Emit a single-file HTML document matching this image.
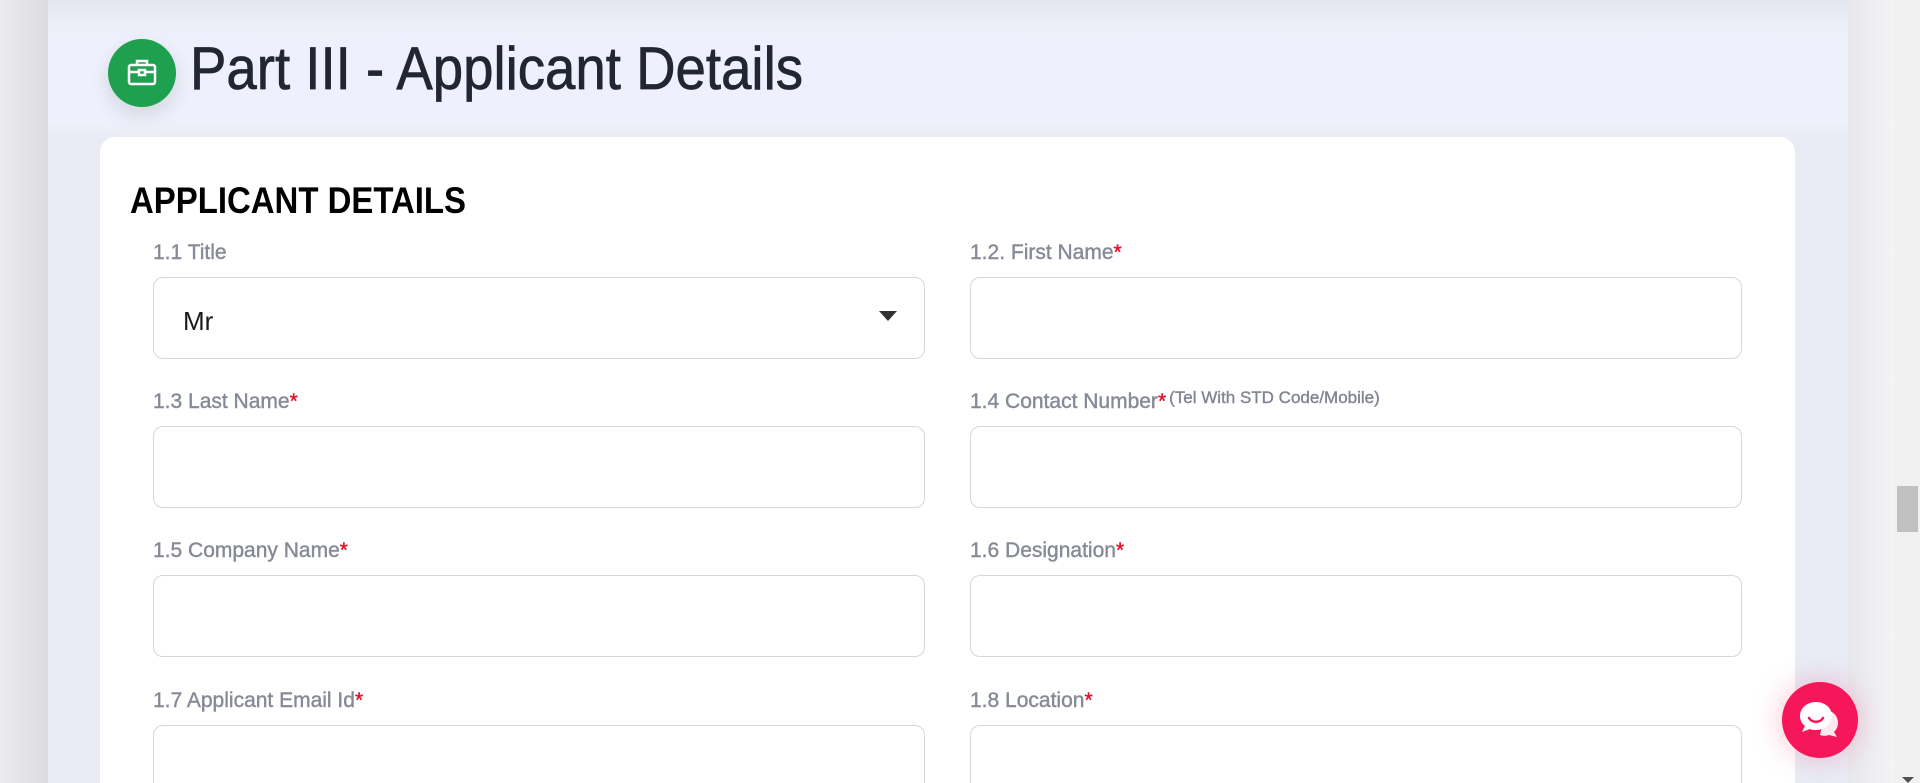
<!DOCTYPE html>
<html><head><meta charset="utf-8"><style>
*{margin:0;padding:0;box-sizing:border-box}
html,body{width:1920px;height:783px;overflow:hidden}
body{background:#f1f1f1;font-family:"Liberation Sans",sans-serif;position:relative}
.left{position:absolute;left:0;top:0;width:48px;height:783px;background:linear-gradient(90deg,#ececee,#dcdce0)}
.panel{position:absolute;left:48px;top:0;width:1800px;height:783px;background:linear-gradient(180deg,#e8ebf3 0,#eef1fb 40px,#eef1fb 120px,#e9ecf5 140px);}
.topsh{position:absolute;left:48px;top:0;width:1800px;height:20px;background:linear-gradient(180deg,#e3e6ee,rgba(238,241,251,0))}
.rgap{position:absolute;left:1848px;top:0;width:47px;height:783px;background:linear-gradient(90deg,#e8e8ec,#f4f4f6)}
.sb{position:absolute;left:1895px;top:0;width:25px;height:783px;background:#f1f1f1}
.thumb{position:absolute;left:1897px;top:486px;width:21px;height:46px;background:#c1c1c1}
.darr{position:absolute;left:1902px;top:777px;width:0;height:0;border-left:6px solid transparent;border-right:6px solid transparent;border-top:6px solid #505050}
.icon{position:absolute;left:108px;top:39px;width:68px;height:68px;border-radius:50%;background:#1ea04f;box-shadow:0 8px 20px rgba(0,0,0,.12)}
.h1{position:absolute;left:190px;top:34px;font-size:60px;color:#222630;white-space:nowrap;transform:scaleX(.91);transform-origin:left;-webkit-text-stroke:.7px #222630}
.card{position:absolute;left:100px;top:137px;width:1695px;height:646px;background:#fff;border-radius:15px 15px 0 0}
.h2{position:absolute;left:130px;top:180px;font-size:37px;font-weight:bold;color:#000;white-space:nowrap;transform:scaleX(.89);transform-origin:left}
.lab{position:absolute;font-size:21px;color:#868a96;white-space:nowrap;-webkit-text-stroke:.4px #868a96;margin-top:2px}
.lab b{color:#e8102a;font-weight:normal;-webkit-text-stroke:.4px #e8102a}
.lab small{font-size:17px;color:#80848f;position:relative;top:-5px;margin-left:3px}
.box{position:absolute;width:772px;height:82px;border:1px solid #d6d6e0;border-radius:10px;background:#fff}
.open{height:58px;border-bottom:none;border-radius:10px 10px 0 0}
.mr{position:absolute;left:183px;top:306px;font-size:26px;color:#1a1a1a}
.arr{position:absolute;left:879px;top:311px;border-left:9px solid transparent;border-right:9px solid transparent;border-top:10px solid #333}
.chat{position:absolute;left:1782px;top:682px;width:76px;height:76px;border-radius:50%;background:#f5175a;box-shadow:0 0 30px rgba(245,23,90,.25)}
</style></head><body>
<div class="left"></div><div class="panel"></div><div class="topsh"></div><div class="rgap"></div>
<div class="sb"></div><div class="thumb"></div><div class="darr"></div>
<div class="icon"><svg width="68" height="68" viewBox="0 0 68 68"><g fill="none" stroke="#fff" stroke-width="2.5"><rect x="21" y="26" width="26" height="19" rx="2"/><path d="M29 26v-4h10v4M21 33h26"/><rect x="31" y="31" width="6" height="5" fill="#1ea04f"/></g></svg></div>
<div class="h1">Part III - Applicant Details</div>
<div class="card"></div>
<div class="h2">APPLICANT DETAILS</div>

<div class="lab" style="left:153px;top:239px">1.1 Title</div>
<div class="lab" style="left:970px;top:239px">1.2. First Name<b>*</b></div>
<div class="box" style="left:153px;top:277px"></div>
<div class="box" style="left:970px;top:277px"></div>
<div class="mr">Mr</div><div class="arr"></div>

<div class="lab" style="left:153px;top:388px">1.3 Last Name<b>*</b></div>
<div class="lab" style="left:970px;top:388px">1.4 Contact Number<b>*</b><small>(Tel With STD Code/Mobile)</small></div>
<div class="box" style="left:153px;top:426px"></div>
<div class="box" style="left:970px;top:426px"></div>

<div class="lab" style="left:153px;top:537px">1.5 Company Name<b>*</b></div>
<div class="lab" style="left:970px;top:537px">1.6 Designation<b>*</b></div>
<div class="box" style="left:153px;top:575px"></div>
<div class="box" style="left:970px;top:575px"></div>

<div class="lab" style="left:153px;top:687px">1.7 Applicant Email Id<b>*</b></div>
<div class="lab" style="left:970px;top:687px">1.8 Location<b>*</b></div>
<div class="box open" style="left:153px;top:725px"></div>
<div class="box open" style="left:970px;top:725px"></div>

<div class="chat"><svg width="76" height="76" viewBox="0 0 76 76"><path d="M44 28c8 1 12 7 12 13 0 4-2 7-4 9l3 5-8-2c-3 1-6 1-9 0" fill="#fff" opacity=".9"/><path d="M34 20c-9 0-16 6-16 14 0 4 2 8 5 10l-3 6 8-3c2 1 4 1 6 1 9 0 16-6 16-14s-7-14-16-14z" fill="#fff"/><path d="M27 36c3 5 11 5 14 0" fill="none" stroke="#f5175a" stroke-width="2.5" stroke-linecap="round"/></svg></div>
</body></html>
